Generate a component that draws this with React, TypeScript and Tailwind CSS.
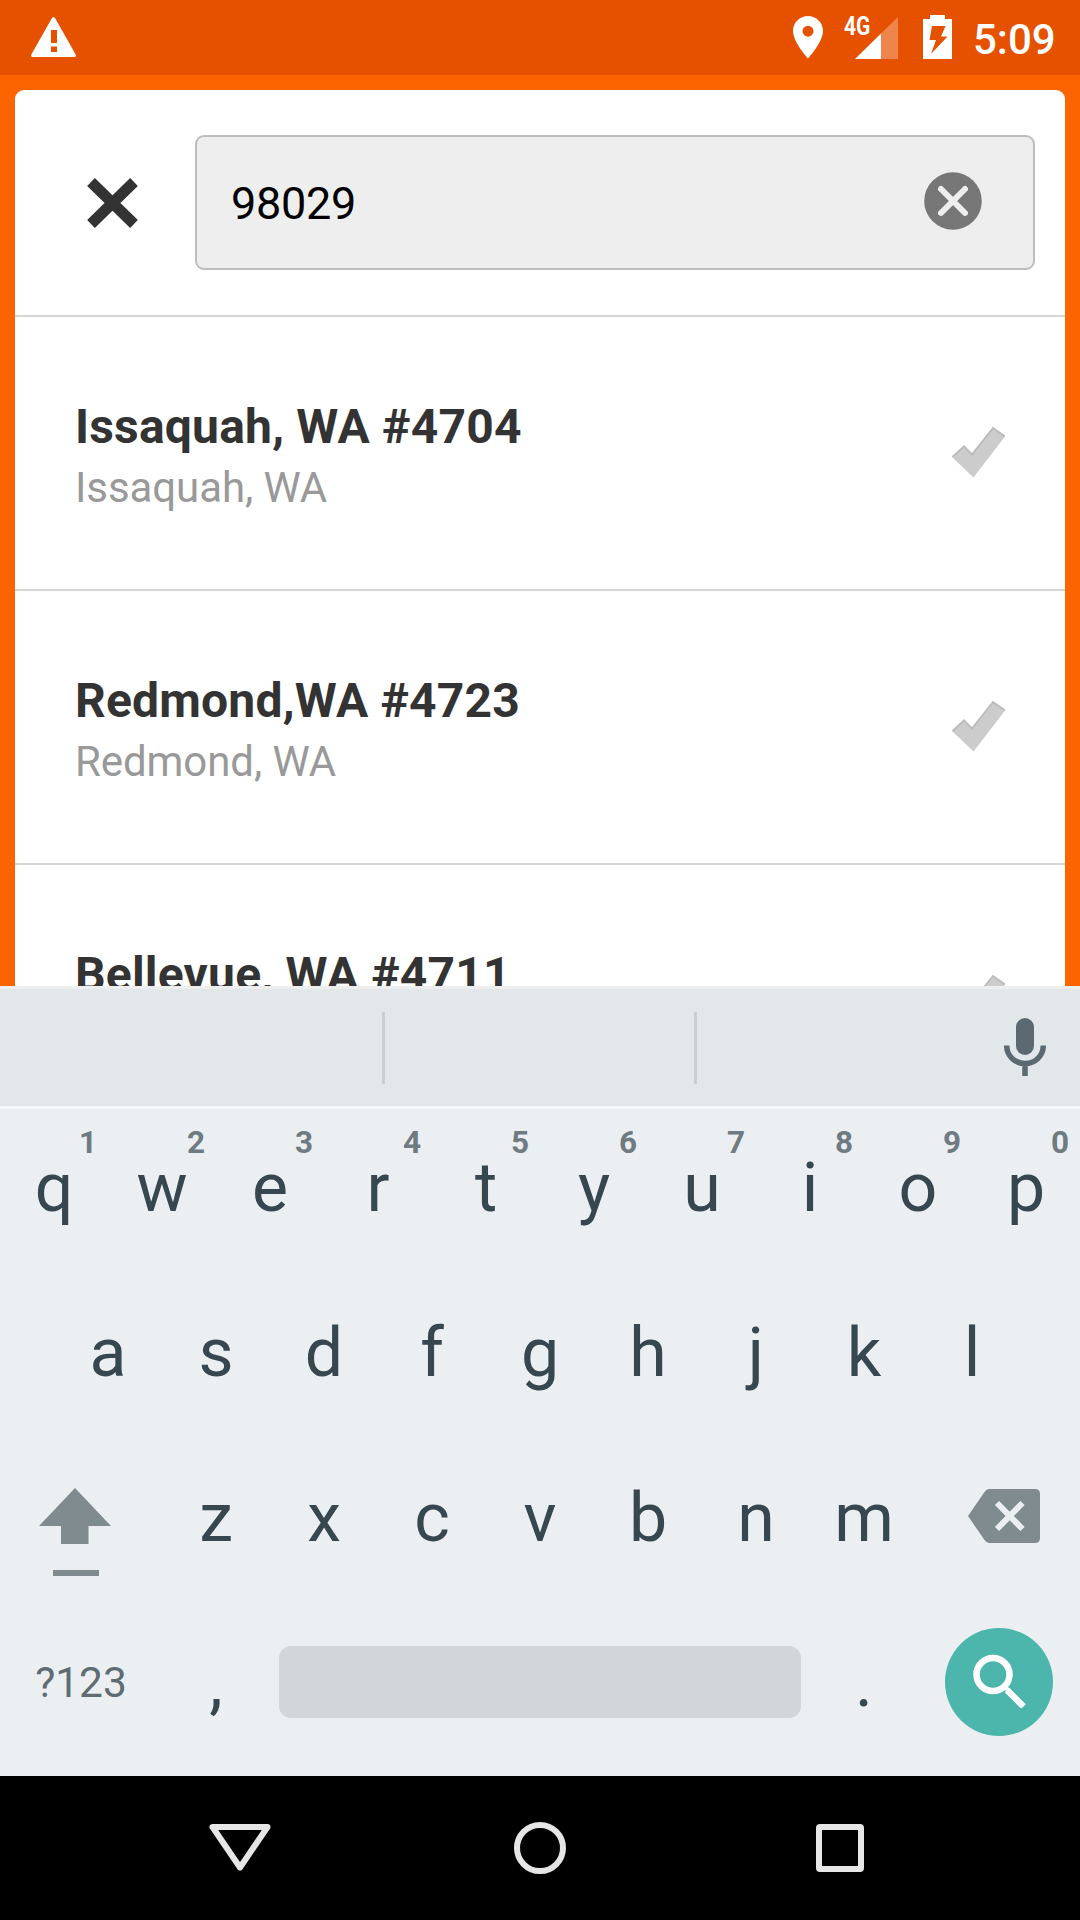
import React from "react";

const stores = [
  { name: "Issaquah, WA #4704", city: "Issaquah, WA" },
  { name: "Redmond,WA #4723", city: "Redmond, WA" },
  { name: "Bellevue, WA #4711" },
];

const topRow = ["q", "w", "e", "r", "t", "y", "u", "i", "o", "p"];
const homeRow = ["a", "s", "d", "f", "g", "h", "j", "k", "l"];
const bottomRow = ["z", "x", "c", "v", "b", "n", "m"];

function StatusBar() {
  return (
    <header className="flex h-[75px] shrink-0 items-start bg-[#e65100] text-white">
      <svg className="mt-[17px] ml-[31px] h-[40px] w-[45px]" viewBox="0 0 45 40" fill="currentColor">
        <path
          fillRule="evenodd"
          d="M21 1Q22.500-1 24 1L44.700 37.500Q45.500 40 43.500 40H1.500Q-.5 40 .3 37.500ZM20 13V26H26V13ZM20 29.500V35H26V29.500Z"
        />
      </svg>
      <svg className="mt-[16px] ml-[716.500px] h-[43px] w-[30px]" viewBox="0 0 30 43" fill="currentColor">
        <path fillRule="evenodd" d="M15 0C6.700 0 0 6.700 0 15C0 26 15 42.500 15 42.500S30 26 30 15C30 6.700 23.300 0 15 0ZM15 9.700A5.500 5.500 0 1 1 15 20.700A5.500 5.500 0 0 1 15 9.700Z" />
      </svg>
      <div className="relative mt-[17px] ml-[32.500px] h-[42px] w-[43px]">
        <svg className="h-[42px] w-[43px]" viewBox="0 0 43 42" fill="currentColor">
          <path d="M43 0V42H26V16.600Z" opacity=".3" />
          <path d="M26 16.600V42H0Z" />
        </svg>
        <span className="absolute top-[-5px] left-[-11px] origin-left scale-x-[0.84] text-[25px] leading-[30px] font-bold">4G</span>
      </div>
      <svg className="mt-[15px] ml-[25px] h-[44px] w-[29px]" viewBox="0 0 29 44" fill="currentColor">
        <path fillRule="evenodd" d="M7 0H22V4H29V44H0V4H7ZM9 11L6.500 25H13L8 39L24.500 21.500H18L22.500 11Z" />
      </svg>
      <span className="ml-[21px] text-[42px] leading-[80px] font-medium">5:09</span>
    </header>
  );
}

function SearchHeader() {
  return (
    <div className="flex h-[225px] shrink-0 items-start">
      <svg className="mt-[88px] ml-[72px] h-[50px] w-[51px]" viewBox="0 0 51 50">
        <path d="M4 4L47 46M47 4L4 46" stroke="#333" strokeWidth="11" />
      </svg>
      <div className="mt-[45px] ml-[57px] flex h-[135px] w-[840px] items-start rounded-[9px] border-2 border-[#bdbdbd] bg-[#eee]">
        <span className="ml-[34px] flex-1 text-[45px] leading-[134px] tracking-[-0.300px] text-black">98029</span>
        <svg className="mt-[34.500px] mr-[51.500px] h-[58px] w-[58px]" viewBox="0 0 58 58">
          <circle cx="29" cy="29" r="28.800" fill="#777" />
          <path d="M17 17L41 41M41 17L17 41" stroke="#eee" strokeWidth="6" strokeLinecap="round" />
        </svg>
      </div>
    </div>
  );
}

function StoreRow({ name, city }: { name: string; city?: string }) {
  return (
    <div className="flex h-[274px] shrink-0 items-start border-t-2 border-[#d6d6d6]">
      <div className="ml-[60px] flex-1 pt-[80px]">
        <div className="text-[48px] leading-[60px] font-bold tracking-[0.200px] text-[#333]">{name}</div>
        {city && <div className="mt-px text-[42px] leading-[60px] tracking-[-0.080px] text-[#999]">{city}</div>}
      </div>
      <svg className="mt-[109px] mr-[60px] h-[53px] w-[54px]" viewBox="0 0 54 53">
        <path d="M1 31L13 20L21 28.500L42 1.500L54 10.500L22.500 51.500Z" fill="#ccc" />
        <path d="M1.500 31L13 20.500L21 28.500L42 2L54 10.500" fill="none" stroke="#bcbcbc" strokeWidth="2" />
      </svg>
    </div>
  );
}

function Key({ label, hint }: { label: string; hint?: string }) {
  return (
    <div className="relative w-[108px] text-center text-[68px] leading-[159px] text-[#37474f]">
      {label}
      {hint && (
        <span className="absolute top-[14px] right-[11px] text-[31.500px] leading-[40px] font-bold text-[#6f7b81]">{hint}</span>
      )}
    </div>
  );
}

function Keyboard() {
  return (
    <section className="flex h-[790px] shrink-0 flex-col bg-[#ebeff2]">
      <div className="flex h-[123px] items-start border-t-3 border-b-3 border-t-[#eee] border-b-[#f5f7f8] bg-[#e2e7ea]">
        <div className="mt-[23px] ml-[382px] h-[72px] w-[3px] bg-[#cacfd2]" />
        <div className="mt-[23px] ml-[309px] h-[72px] w-[3px] bg-[#cacfd2]" />
        <svg className="mt-[29px] ml-[307px] h-[58px] w-[42px]" viewBox="0 0 42 58">
          <rect x="12" y="0" width="18" height="37" rx="9" fill="#5b6a71" />
          <path d="M2.700 27.500C2.700 38 11 45.500 21 45.500S39.300 38 39.300 27.500M21 45V58" fill="none" stroke="#5b6a71" strokeWidth="5.500" />
        </svg>
      </div>
      <div className="flex h-[165px]">
        {topRow.map((k, i) => (
          <Key key={k} label={k} hint={String((i + 1) % 10)} />
        ))}
      </div>
      <div className="flex h-[165px] justify-center">
        {homeRow.map((k) => (
          <Key key={k} label={k} />
        ))}
      </div>
      <div className="flex h-[165px]">
        <div className="w-[162px] pt-[49px] pl-[39px]">
          <svg className="h-[88px] w-[72px]" viewBox="0 0 72 88" fill="#808b8f">
            <path d="M36 0L72 38H49.500V56H22V38H0Z" />
            <rect x="14" y="82" width="46" height="6" />
          </svg>
        </div>
        {bottomRow.map((k) => (
          <Key key={k} label={k} />
        ))}
        <div className="w-[162px] pt-[50px] pl-[50px]">
          <svg className="h-[54px] w-[72px]" viewBox="0 0 72 54">
            <path d="M21 0H67Q72 0 72 5V49Q72 54 67 54H21Q18.500 54 16.500 51L0 27L16.500 3Q18.500 0 21 0Z" fill="#808b8f" />
            <path d="M29 14L54.500 40M54.500 14L29 40" stroke="#ebeff2" strokeWidth="6" />
          </svg>
        </div>
      </div>
      <div className="flex h-[165px] items-start">
        <div className="w-[162px] text-center text-[42.500px] leading-[157px] text-[#5f6c72]">?123</div>
        <Key label="," />
        <div className="mx-[9px] mt-[42px] h-[72px] w-[522px] rounded-xl bg-[#d1d6d9]" />
        <Key label="." />
        <div className="mt-6 ml-[27px] h-[108px] w-[108px] rounded-full bg-[#4db6ac] pt-[26px] pl-[27.500px]">
          <svg className="h-[54px] w-[54px]" viewBox="0 0 54 54" fill="none" stroke="#fff">
            <circle cx="20" cy="20.500" r="16.500" strokeWidth="6.500" />
            <path d="M34 36L50.500 52.500" strokeWidth="6.500" />
            <path d="M30 31L36 37" strokeWidth="4" />
          </svg>
        </div>
      </div>
    </section>
  );
}

function NavBar() {
  return (
    <nav className="flex h-[144px] shrink-0 items-start bg-black">
      <svg className="mt-[48px] ml-[209px] h-[47px] w-[62px]" viewBox="0 0 62 47">
        <path d="M3.500 3H58.500L31 43.500Z" fill="none" stroke="#e6e6e6" strokeWidth="6" strokeLinejoin="round" />
      </svg>
      <div className="mt-[46px] ml-[243px] h-[52px] w-[52px] rounded-full border-6 border-[#e6e6e6]" />
      <div className="mt-[48px] ml-[250px] h-[48px] w-[48px] rounded-[4px] border-6 border-[#e6e6e6]" />
    </nav>
  );
}

export default function App() {
  return (
    <div className="flex h-[1920px] w-[1080px] flex-col overflow-hidden bg-[#fb6400] font-['Roboto',sans-serif]">
      <StatusBar />
      <main className="flex h-[911px] shrink-0 flex-col overflow-hidden px-[15px] pt-[15px]">
        <div className="flex flex-1 flex-col overflow-hidden rounded-t-[9px] bg-white">
          <SearchHeader />
          {stores.map((s) => (
            <StoreRow key={s.name} name={s.name} city={s.city} />
          ))}
        </div>
      </main>
      <Keyboard />
      <NavBar />
    </div>
  );
}
